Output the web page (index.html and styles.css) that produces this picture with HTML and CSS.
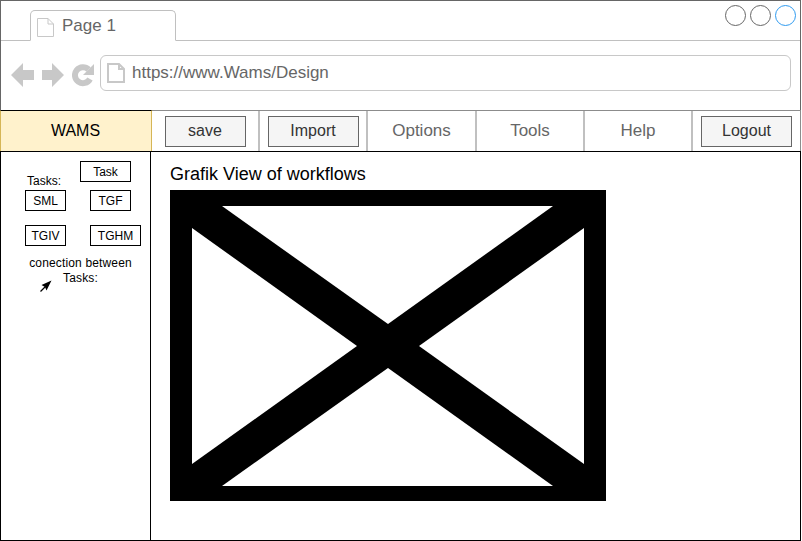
FILE: index.html
```html
<!DOCTYPE HTML>
<html>
<head>
	<meta charset="utf-8">
	<title>WAMS Design</title>
	<link rel="stylesheet" href="styles.css">
</head>
<body>
	<div class="window">
		<div class="tabbar">
			<div class="tab">
				<svg class="pageicon" width="17" height="19" viewBox="0 0 17 19"><path d="M.5.5H11L16.5 6V18.500H.5ZM11 .5V6H16.5" fill="#fff" stroke="#c8c8c8"/></svg>
				<span>Page 1</span>
			</div>
			<div class="dots">
				<span class="dot"></span>
				<span class="dot"></span>
				<span class="dot blue"></span>
			</div>
		</div>
		<div class="addressbar">
			<div class="navicons">
				<svg width="23" height="24" viewBox="0 0 23 24"><path d="M0 12 12 0V7H23V17H12V24Z" fill="#c8c8c8"/></svg>
				<svg width="22" height="24" viewBox="0 0 22 24"><path d="M22 12 10 0V7H0V17H10V24Z" fill="#c8c8c8"/></svg>
				<svg width="22" height="24" viewBox="0 0 22 24">
					<path d="M16.600 6.500A8 8 0 1 0 18 16" fill="none" stroke="#c8c8c8" stroke-width="6"/>
					<path d="M22 1V12H11Z" fill="#c8c8c8"/>
				</svg>
			</div>
			<div class="urlbox">
				<svg width="18" height="20" viewBox="0 0 18 20"><path d="M1 1H12L17 6V19H1ZM12 1V6H17" fill="#fff" stroke="#c8c8c8" stroke-width="2"/></svg>
				<span>https://www.Wams/Design</span>
			</div>
		</div>
		<div class="menubar">
			<div class="brand">WAMS</div>
			<div class="cell"><button class="btn save">save</button></div>
			<div class="cell"><button class="btn">Import</button></div>
			<div class="cell wide">Options</div>
			<div class="cell">Tools</div>
			<div class="cell">Help</div>
			<div class="cell last"><button class="btn">Logout</button></div>
		</div>
		<div class="content">
			<div class="sidebar">
				<div class="taskhead">
					<span class="tasks-label">Tasks:</span>
					<div class="box">Task</div>
				</div>
				<div class="taskrow">
					<div class="box small">SML</div>
					<div class="box small">TGF</div>
				</div>
				<div class="taskrow">
					<div class="box small">TGIV</div>
					<div class="box">TGHM</div>
				</div>
				<p class="conn">conection between<br>Tasks:</p>
				<svg class="arrow" width="12" height="12" viewBox="0 0 12 12"><path d="M.5 11.500 6 6" stroke="#000" stroke-width="1.300"/><path d="M11.500.5 1.500 5 5 7 6.500 10.500Z" fill="#000"/></svg>
			</div>
			<div class="main">
				<h1>Grafik View of workflows</h1>
				<svg class="placeholder" width="436" height="311" viewBox="0 0 436 311">
					<rect width="436" height="311" fill="#000"/>
					<path d="M52 16H383L218 134Z" fill="#fff"/>
					<path d="M22 38V274L187 156Z" fill="#fff"/>
					<path d="M414 38V274L249 156Z" fill="#fff"/>
					<path d="M52 296H383L218 178Z" fill="#fff"/>
				</svg>
			</div>
		</div>
	</div>
</body>
</html>
```
FILE: styles.css
```css
* {
	box-sizing: border-box;
}

body {
	margin: 0;
	background: #fff;
	font-family: "Liberation Sans", Arial, sans-serif;
}

.window {
	width: 801px;
	height: 541px;
	border: 1px solid #666;
	border-bottom: 0;
	display: flex;
	flex-direction: column;
}

.tabbar {
	height: 40px;
	flex: none;
	border-bottom: 1px solid #c0c0c0;
	position: relative;
	padding: 9px 0 0 29px;
}

.tab {
	width: 146px;
	height: 31px;
	background: #fff;
	border: 1px solid #c0c0c0;
	border-bottom: 1px solid #fff;
	border-radius: 5px 5px 0 0;
	padding: 5px 0 0 6px;
	display: flex;
	gap: 8px;
	font-size: 17px;
	color: #666;
}

.pageicon {
	flex: none;
	margin-top: 2px;
}

.dots {
	position: absolute;
	top: 4px;
	right: 4px;
	display: flex;
	gap: 4px;
}

.dot {
	width: 21px;
	height: 21px;
	border: 1px solid #666;
	border-radius: 50%;
}

.dot.blue {
	border-color: #2f9bf0;
}

.addressbar {
	height: 69px;
	flex: none;
	display: flex;
	padding: 14px 9px 0 10px;
}

.navicons {
	display: flex;
	gap: 8px;
	width: 89px;
	padding-top: 8px;
	flex: none;
}

.navicons svg {
	flex: none;
}

.urlbox {
	flex: 1;
	height: 36px;
	border: 1px solid #c8c8c8;
	border-radius: 6px;
	display: flex;
	align-items: center;
	gap: 7px;
	padding-left: 6px;
	font-size: 17px;
	color: #666;
}

.menubar {
	height: 41px;
	flex: none;
	display: flex;
	border-top: 1px solid #8c8c8c;
	margin-left: -1px;
	margin-right: -1px;
}

.brand {
	width: 152px;
	flex: none;
	margin-top: -1px;
	height: 42px;
	padding-right: 1px;
	background: #fff2cc;
	border: 1px solid #d6b656;
	border-top: 1px solid #000;
	display: flex;
	align-items: center;
	justify-content: center;
	font-size: 16px;
	color: #000;
}

.cell {
	width: 108px;
	flex: none;
	border-right: 2px solid #c0c0c0;
	display: flex;
	align-items: center;
	justify-content: center;
	font-size: 17px;
	color: #666;
}

.cell.wide {
	width: 109px;
}

.cell.last {
	flex: 1;
	border-right: 1px solid #8c8c8c;
}

.btn {
	width: 91px;
	height: 31px;
	padding: 0;
	background: #f5f5f5;
	border: 1px solid #666;
	border-radius: 0;
	font: inherit;
	font-size: 16px;
	color: #333;
}

.btn.save {
	width: 81px;
}

.content {
	flex: 1;
	display: flex;
	margin-right: -1px;
	margin-left: -1px;
	border: 1px solid #000;
	min-height: 0;
}

.sidebar {
	width: 150px;
	flex: none;
	border-right: 1px solid #000;
	padding: 9px 0 0 24px;
	font-size: 12px;
	color: #000;
}

.taskhead {
	display: flex;
	align-items: flex-start;
	height: 29px;
}

.tasks-label {
	margin: 13px 0 0 2px;
	width: 53px;
}

.taskrow {
	display: flex;
	gap: 24px;
	height: 35px;
}

.box {
	width: 51px;
	height: 21px;
	flex: none;
	border: 1px solid #000;
	display: flex;
	align-items: center;
	justify-content: center;
}

.box.small {
	width: 41px;
}

.conn {
	margin: -4px 0 0 0;
	width: 111px;
	text-align: center;
	line-height: 15px;
	letter-spacing: 0.15px;
}

.arrow {
	display: block;
	margin: -6px 0 0 15px;
}

.main {
	flex: 1;
	padding: 10px 0 0 19px;
}

h1 {
	margin: 0 0 4px;
	font-size: 18px;
	font-weight: normal;
	line-height: 24px;
	color: #000;
}

.placeholder {
	display: block;
}
```
